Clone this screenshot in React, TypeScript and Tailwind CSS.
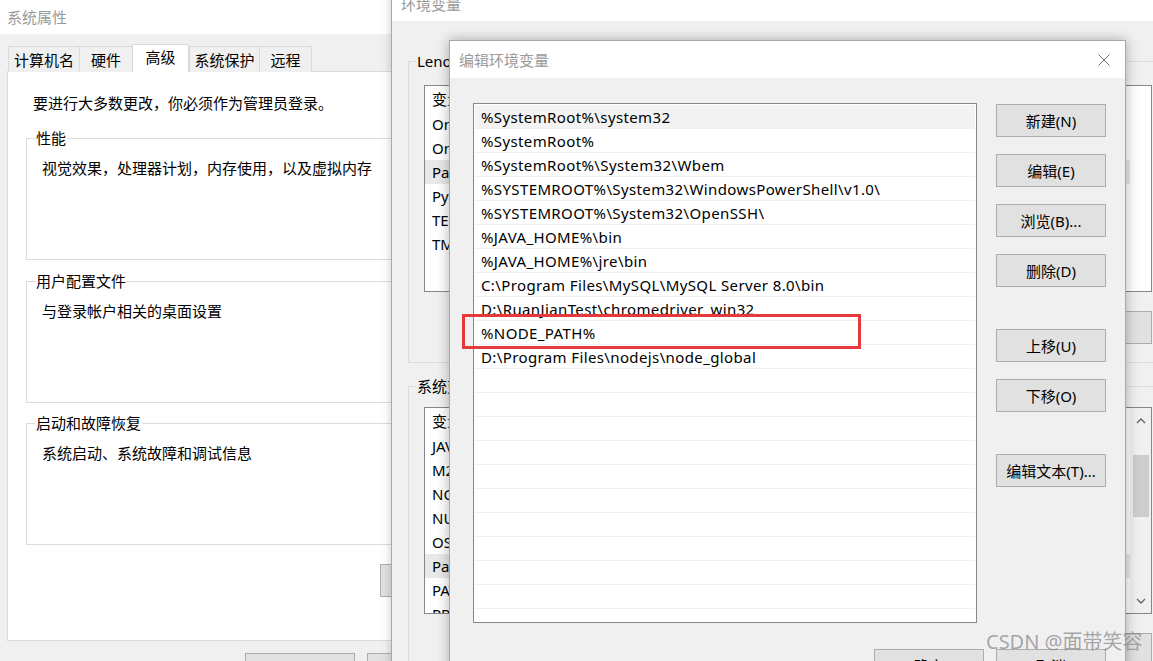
import type { ReactNode } from 'react'

const dialogPaths = [
  '%SystemRoot%\\system32',
  '%SystemRoot%',
  '%SystemRoot%\\System32\\Wbem',
  '%SYSTEMROOT%\\System32\\WindowsPowerShell\\v1.0\\',
  '%SYSTEMROOT%\\System32\\OpenSSH\\',
  '%JAVA_HOME%\\bin',
  '%JAVA_HOME%\\jre\\bin',
  'C:\\Program Files\\MySQL\\MySQL Server 8.0\\bin',
  'D:\\RuanJianTest\\chromedriver_win32',
  '%NODE_PATH%',
  'D:\\Program Files\\nodejs\\node_global',
]

const userVars = [
  ['OneDrive', 'C:\\Users\\Lenovo\\OneDrive'],
  ['OneDriveConsumer', 'C:\\Users\\Lenovo\\OneDrive'],
  ['Path', 'C:\\Users\\Lenovo\\AppData\\Local\\Microsoft\\WindowsApps;'],
  ['PyCharm', 'D:\\Program Files\\JetBrains\\PyCharm\\bin;'],
  ['TEMP', 'C:\\Users\\Lenovo\\AppData\\Local\\Temp'],
  ['TMP', 'C:\\Users\\Lenovo\\AppData\\Local\\Temp'],
]

const systemVars = [
  ['JAVA_HOME', 'D:\\Program Files\\Java\\jdk1.8.0'],
  ['M2_HOME', 'D:\\Program Files\\apache-maven'],
  ['NODE_PATH', 'D:\\Program Files\\nodejs\\node_modules'],
  ['NUMBER_OF_PROCESSORS', '8'],
  ['OS', 'Windows_NT'],
  ['Path', '%SystemRoot%\\system32;%SystemRoot%;'],
  ['PATHEXT', '.COM;.EXE;.BAT;.CMD;.VBS;.VBE;.JS'],
  ['PROCESSOR_ARCHITECTURE', 'AMD64'],
]

function Btn({ children, className = 'w-[110px]' }: { children?: ReactNode; className?: string }): JSX.Element {
  return (
    <div
      className={`flex h-[33px] shrink-0 items-center justify-center border border-[#adadad] bg-[#e1e1e1] text-[15px] leading-[20px] text-black ${className}`}
    >
      {children}
    </div>
  )
}

function Group({
  title,
  legendBg,
  className = '',
  children,
}: {
  title: string
  legendBg: string
  className?: string
  children?: ReactNode
}): JSX.Element {
  return (
    <div className={`border border-[#dcdcdc] ${className}`}>
      <span className={`-mt-[11px] block w-fit px-[1px] leading-[20px] ${legendBg}`}>{title}</span>
      {children}
    </div>
  )
}

function VarList({ rows, selected, scroll }: { rows: string[][]; selected: number; scroll?: boolean }): JSX.Element {
  return (
    <div className="ml-[15px] flex h-[207px] w-[728px] overflow-hidden border border-[#828790] bg-white">
      <div className="flex-1">
        <div className="flex h-[26px] items-center">
          <span className="w-[190px] pl-[7px]">变量</span>
          <span className="pl-[7px]">值</span>
        </div>
        {rows.map(([name, value], i) => (
          <div key={name} className={`flex h-[24px] items-center ${i === selected ? 'bg-[#e9e9e9]' : ''}`}>
            <span className="w-[190px] whitespace-nowrap pl-[7px]">{name}</span>
            <span className="whitespace-nowrap pl-[7px]">{value}</span>
          </div>
        ))}
      </div>
      <div className={`flex w-[21px] flex-col items-center ${scroll ? 'bg-[#f0f0f0]' : 'bg-white'}`}>
        {scroll && (
          <>
            <svg width="10" height="6" viewBox="0 0 10 6" className="mt-[10px]">
              <path d="M1 5 L5 1 L9 5" fill="none" stroke="#606060" strokeWidth="1.3" />
            </svg>
            <div className="mt-[31px] h-[62px] w-[16px] bg-[#cdcdcd]" />
            <div className="flex-1" />
            <svg width="10" height="6" viewBox="0 0 10 6" className="mb-[9px]">
              <path d="M1 1 L5 5 L9 1" fill="none" stroke="#606060" strokeWidth="1.3" />
            </svg>
          </>
        )}
      </div>
    </div>
  )
}

function SystemProperties(): JSX.Element {
  const tabs = [
    { label: '计算机名', w: 'w-[71px]' },
    { label: '硬件', w: 'w-[53px]' },
    { label: '高级', w: 'w-[57px]', active: true },
    { label: '系统保护', w: 'w-[70px]' },
    { label: '远程', w: 'w-[53px]' },
  ]
  return (
    <div className="absolute left-0 top-0 h-[700px] w-[520px] bg-[#f0f0f0]">
      <div className="flex h-[34px] items-center bg-white pl-[7px] text-[#9a9a9a]">系统属性</div>
      <div className="mt-[10px] flex h-[28px] items-end pl-[8px]">
        {tabs.map((t, i) =>
          t.active ? (
            <div
              key={t.label}
              className={`relative z-10 flex h-[28px] items-start justify-center border-x border-t border-[#d9d9d9] bg-white pt-[2px] ${t.w}`}
            >
              {t.label}
            </div>
          ) : (
            <div
              key={t.label}
              className={`flex h-[26px] items-center justify-center border-t border-l border-[#d9d9d9] bg-[#f0f0f0] ${t.w} ${i === tabs.length - 1 ? 'border-r' : ''}`}
            >
              {t.label}
            </div>
          ),
        )}
      </div>
      <div className="-mt-px ml-[7px] h-[570px] w-[500px] border border-[#d9d9d9] bg-white pt-[21px]">
        <p className="pl-[25px] leading-[20px]">要进行大多数更改，你必须作为管理员登录。</p>
        <Group title="性能" legendBg="bg-white ml-[8px]" className="ml-[18px] mt-[25px] h-[122px] w-[460px]">
          <p className="mt-[10px] pl-[15px] leading-[20px]">视觉效果，处理器计划，内存使用，以及虚拟内存</p>
        </Group>
        <Group title="用户配置文件" legendBg="bg-white ml-[8px]" className="ml-[18px] mt-[21px] h-[122px] w-[460px]">
          <p className="mt-[10px] pl-[15px] leading-[20px]">与登录帐户相关的桌面设置</p>
        </Group>
        <Group title="启动和故障恢复" legendBg="bg-white ml-[8px]" className="ml-[18px] mt-[20px] h-[122px] w-[460px]">
          <p className="mt-[10px] pl-[15px] leading-[20px]">系统启动、系统故障和调试信息</p>
        </Group>
        <Btn className="ml-[372px] mt-[19px] w-[130px]">环境变量(N)...</Btn>
      </div>
      <div className="mt-[12px] flex gap-[12px] pl-[245px]">
        <Btn>确定</Btn>
        <Btn>取消</Btn>
      </div>
    </div>
  )
}

function EnvironmentVariables(): JSX.Element {
  return (
    <div className="absolute left-[391px] top-[-14px] h-[720px] w-[800px] border-l border-[#a9a9a9] bg-[#f0f0f0] shadow-[0_0_9px_rgba(0,0,0,0.22)]">
      <div className="flex h-[35px] items-center bg-white pl-[9px] text-[#9a9a9a]">环境变量</div>
      <Group title="Lenovo 的用户变量(U)" legendBg="bg-[#f0f0f0] ml-[7px]" className="ml-[16px] mt-[40px] h-[302px] w-[760px]">
        <div className="mt-[14px]">
          <VarList rows={userVars} selected={2} />
        </div>
        <div className="ml-[15px] mt-[19px] flex w-[728px] justify-end gap-[12px]">
          <Btn>新建(N)...</Btn>
          <Btn>编辑(E)...</Btn>
          <Btn>删除(D)</Btn>
        </div>
      </Group>
      <Group title="系统变量(S)" legendBg="bg-[#f0f0f0] ml-[7px]" className="ml-[16px] mt-[23px] h-[320px] w-[760px]">
        <div className="mt-[11px]">
          <VarList rows={systemVars} selected={5} scroll />
        </div>
        <div className="ml-[15px] mt-[19px] flex w-[728px] justify-end gap-[12px]">
          <Btn>新建(W)...</Btn>
          <Btn>编辑(I)...</Btn>
          <Btn>删除(L)</Btn>
        </div>
      </Group>
    </div>
  )
}

function EditDialog(): JSX.Element {
  const rows = Array.from({ length: 22 }, (_, i) => dialogPaths[i] ?? '')
  return (
    <div className="absolute left-[449px] top-[40px] h-[640px] w-[677px] border border-[#a8a8a8] bg-[#f0f0f0] shadow-[0_0_12px_rgba(0,0,0,0.3)]">
      <div className="flex h-[37px] items-center justify-between bg-white pl-[9px] pr-[15px]">
        <span className="text-[#9a9a9a]">编辑环境变量</span>
        <svg width="12" height="12" viewBox="0 0 12 12">
          <path d="M0.5 0.5 L11.5 11.5 M11.5 0.5 L0.5 11.5" stroke="#6a6a6a" strokeWidth="1" />
        </svg>
      </div>
      <div className="flex">
        <div className="ml-[23px] mt-[25px] h-[520px] w-[504px] overflow-hidden border border-[#828790] bg-white pt-px">
          {rows.map((text, i) => (
            <div
              key={i}
              className={`mx-px flex h-[24px] items-center whitespace-nowrap border-b border-[#f0f0f0] pl-[6px] tracking-[0.38px] ${i === 0 ? 'bg-[#f3f3f3]' : ''}`}
            >
              {text}
            </div>
          ))}
        </div>
        <div className="ml-[19px] mt-[26px] flex flex-col">
          <Btn>新建(N)</Btn>
          <Btn className="mt-[17px] w-[110px]">编辑(E)</Btn>
          <Btn className="mt-[17px] w-[110px]">浏览(B)...</Btn>
          <Btn className="mt-[17px] w-[110px]">删除(D)</Btn>
          <Btn className="mt-[42px] w-[110px]">上移(U)</Btn>
          <Btn className="mt-[17px] w-[110px]">下移(O)</Btn>
          <Btn className="mt-[42px] w-[110px]">编辑文本(T)...</Btn>
        </div>
      </div>
      <div className="mt-[26px] flex justify-end gap-[12px] pr-[19px]">
        <Btn>确定</Btn>
        <Btn>取消</Btn>
      </div>
    </div>
  )
}

export default function App(): JSX.Element {
  return (
    <div className="relative h-[661px] w-[1153px] overflow-hidden bg-[#f0f0f0] font-['Noto_Sans','Noto_Sans_CJK_SC',sans-serif] text-[15px] leading-[20px] text-black">
      <SystemProperties />
      <EnvironmentVariables />
      <EditDialog />
      {/* annotation drawn over the screenshot */}
      <div className="absolute left-[462px] top-[314px] h-[35px] w-[399px] border-[3px] border-[#e5393b]" />
      <div className="absolute left-[986px] top-[629px] whitespace-nowrap text-[20px] leading-[26px] text-[#8c8c8c]/75">
        CSDN @面带笑容
      </div>
    </div>
  )
}
